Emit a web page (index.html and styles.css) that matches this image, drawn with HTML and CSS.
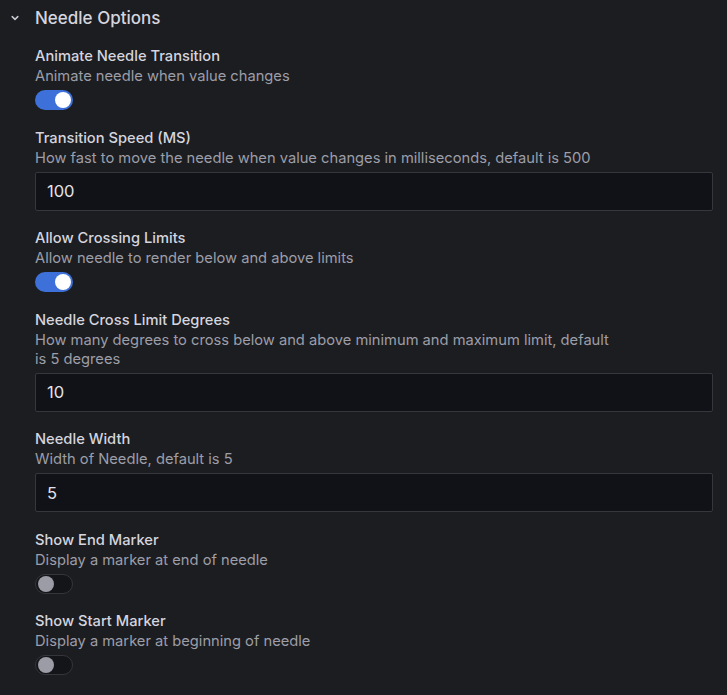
FILE: index.html
```html
<!DOCTYPE html>
<html>
<head>
<meta charset="utf-8">
<link rel="stylesheet" href="styles.css">
</head>
<body>
<div class="section">
  <div class="section-header">
    <svg class="chevron" width="10" height="10" viewBox="0 0 10 10"><path d="M2.2 3.6 L5 6.4 L7.8 3.6" fill="none" stroke="#c8c9d2" stroke-width="1.5" stroke-linecap="round" stroke-linejoin="round"/></svg>
    <span class="section-title">Needle Options</span>
  </div>
  <div class="fields">
    <div class="field">
      <div class="label">Animate Needle Transition</div>
      <div class="desc">Animate needle when value changes</div>
      <div class="control"><span class="switch on"><span class="knob"></span></span></div>
    </div>
    <div class="field">
      <div class="label">Transition Speed (MS)</div>
      <div class="desc">How fast to move the needle when value changes in milliseconds, default is 500</div>
      <div class="control"><div class="input">100</div></div>
    </div>
    <div class="field">
      <div class="label">Allow Crossing Limits</div>
      <div class="desc">Allow needle to render below and above limits</div>
      <div class="control"><span class="switch on"><span class="knob"></span></span></div>
    </div>
    <div class="field">
      <div class="label">Needle Cross Limit Degrees</div>
      <div class="desc narrow">How many degrees to cross below and above minimum and maximum limit, default is 5 degrees</div>
      <div class="control"><div class="input">10</div></div>
    </div>
    <div class="field">
      <div class="label">Needle Width</div>
      <div class="desc">Width of Needle, default is 5</div>
      <div class="control"><div class="input">5</div></div>
    </div>
    <div class="field">
      <div class="label">Show End Marker</div>
      <div class="desc">Display a marker at end of needle</div>
      <div class="control"><span class="switch off"><span class="knob"></span></span></div>
    </div>
    <div class="field">
      <div class="label">Show Start Marker</div>
      <div class="desc">Display a marker at beginning of needle</div>
      <div class="control"><span class="switch off"><span class="knob"></span></span></div>
    </div>
  </div>
</div>
</body>
</html>
```
FILE: styles.css
```css
html, body {
  margin: 0;
  padding: 0;
  background: #1c1d21;
  font-family: Inter, "Noto Sans", "Liberation Sans", sans-serif;
  color: #d0d1da;
}
.section {
  padding: 6px 14px 0 10px;
}
.section-header {
  display: flex;
  align-items: center;
  height: 24px;
}
.chevron {
  width: 10px;
  height: 10px;
  margin-left: 0;
  margin-right: 15px;
}
.section-title {
  font-size: 17px;
  font-weight: 500;
  color: #d4d5de;
}
.fields {
  padding-left: 25px;
  padding-top: 16px;
  display: flex;
  flex-direction: column;
}
.field {
  margin-bottom: 17.5px;
}
.label {
  font-size: 14.7px;
  font-weight: 500;
  line-height: 20px;
  color: #d4d5de;
}
.desc {
  font-size: 14.7px;
  line-height: 19px;
  color: #9d9ea8;
  margin-top: 1px;
}
.desc.narrow {
  max-width: 580px;
}
.control {
  margin-top: 4px;
}
.switch {
  display: block;
  width: 38px;
  height: 20px;
  border-radius: 10px;
  position: relative;
  box-sizing: border-box;
}
.switch.on {
  background: #3d71d9;
}
.switch.off {
  background: #141519;
  border: 1px solid #34363c;
}
.knob {
  position: absolute;
  width: 16px;
  height: 16px;
  border-radius: 50%;
  top: 2px;
}
.switch.on .knob {
  right: 2px;
  background: #ffffff;
}
.switch.off .knob {
  left: 2px;
  top: 1px;
  background: #9b9ca6;
}
.input {
  height: 39px;
  box-sizing: border-box;
  border: 1px solid #36373d;
  border-radius: 2px;
  background: #111217;
  padding: 0 11px;
  display: flex;
  align-items: center;
  font-size: 16.5px;
  color: #e2e3ea;
}
```
